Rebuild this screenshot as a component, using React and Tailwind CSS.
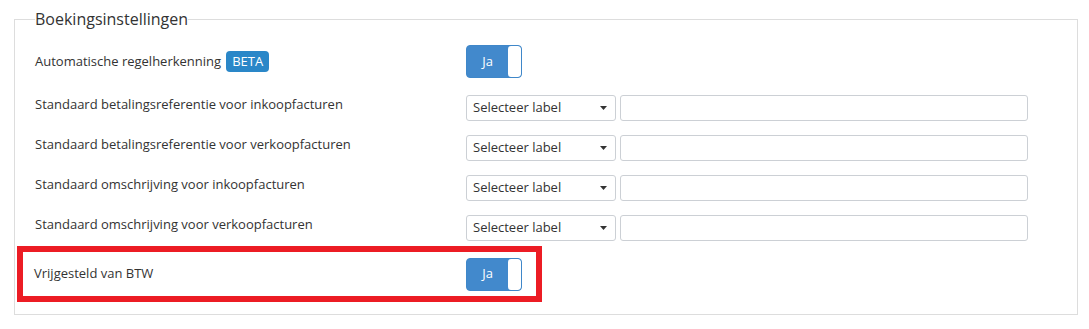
const ROWS = [
  'Standaard betalingsreferentie voor inkoopfacturen',
  'Standaard betalingsreferentie voor verkoopfacturen',
  'Standaard omschrijving voor inkoopfacturen',
  'Standaard omschrijving voor verkoopfacturen',
]

function Toggle() {
  return (
    <div className="flex h-[33px] w-[56px] rounded-[4px] border border-[#3f87c9] bg-[#4289cc] overflow-hidden">
      <div className="flex-1 flex items-center justify-center text-white text-[13px]">Ja</div>
      <div className="w-[13px] bg-white rounded-[3px]" />
    </div>
  )
}

export default function App() {
  return (
    <div className="bg-white w-[1089px] h-[329px] pt-[9px] pl-[14px] text-[#333] text-[13px]" style={{ fontFamily: '"Segoe UI", "Open Sans", "Liberation Sans", sans-serif' }}>
      <fieldset className="w-[1064px] h-[306px] border border-[#ddd] pl-[20px] pr-[20px]">
        <legend className="text-[16px] text-[#333] leading-[20px]">Boekingsinstellingen</legend>

        {/* first row with beta badge */}
        <div className="flex items-center h-[33px] mt-[16px]">
          <div className="w-[431px] flex items-center gap-[5px]">
            <span>Automatische regelherkenning</span>
            <span className="bg-[#2a87c8] text-white text-[13px] rounded-[4px] px-[6px] leading-[21px]">BETA</span>
          </div>
          <Toggle />
        </div>

        <div className="mt-[17px] flex flex-col gap-[14px]">
          {ROWS.map(label => (
            <div key={label} className="flex items-center h-[26px]">
              <div className="w-[431px] -mt-[6px]">{label}</div>
              <div className="flex items-center justify-between w-[150px] h-[26px] border border-[#ccd0d5] rounded-[3px] px-[6px]">
                <span>Selecteer label</span>
                <svg width="7" height="4" viewBox="0 0 7 4" className="mr-[2px]"><path d="M0 0h7L3.5 4z" fill="#333" /></svg>
              </div>
              <div className="ml-[4px] w-[408px] h-[26px] border border-[#ccd0d5] rounded-[3px]" />
            </div>
          ))}
        </div>

        {/* highlighted row */}
        <div className="mt-[5px] -ml-[18px] w-[525px] h-[56px] border-[6px] border-[#ec1c24] flex items-center pl-[11px]">
          <div className="w-[432px]">Vrijgesteld van BTW</div>
          <Toggle />
        </div>
      </fieldset>
    </div>
  )
}
